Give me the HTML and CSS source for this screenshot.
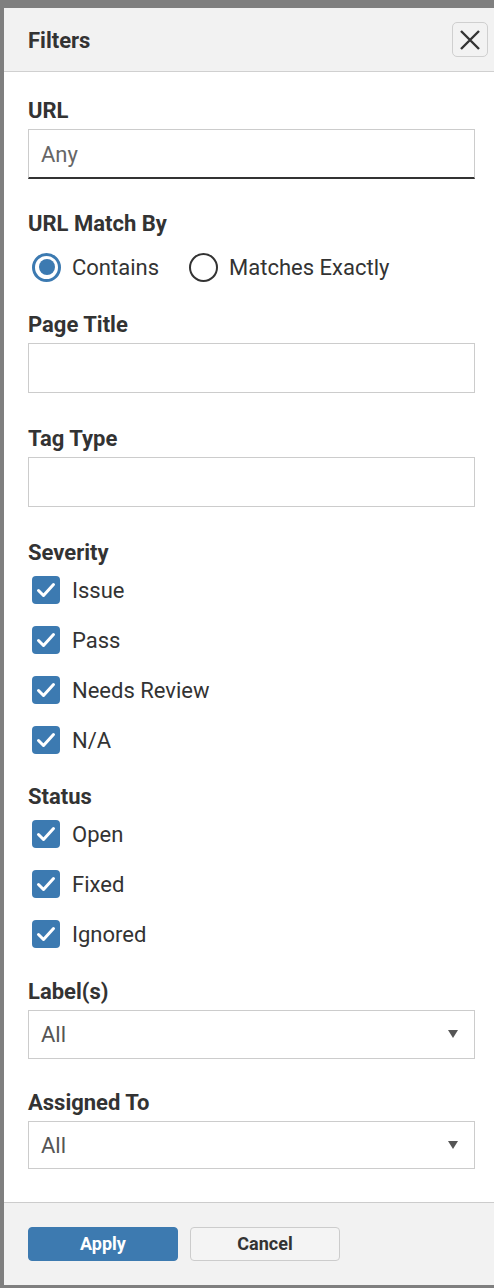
FILE: index.html
```html
<!DOCTYPE html>
<html lang="en">
<head>
<meta charset="utf-8">
<title>Filters</title>
<link rel="stylesheet" href="styles.css">
</head>
<body>
<div class="modal">
  <div class="modal-header">
    <h2 class="modal-title">Filters</h2>
    <button class="close-btn" aria-label="Close">
      <svg width="22" height="22" viewBox="0 0 22 22"><path d="M2 2 L20 20 M20 2 L2 20" stroke="#333" stroke-width="2.4" fill="none"/></svg>
    </button>
  </div>
  <div class="modal-body">
    <div class="field f-url">
      <div class="label">URL</div>
      <div class="input input-active"><span class="placeholder">Any</span></div>
    </div>
    <div class="field f-match">
      <div class="label">URL Match By</div>
      <div class="radio-row">
        <div class="radio-item"><span class="radio checked"></span><span class="opt">Contains</span></div>
        <div class="radio-item"><span class="radio"></span><span class="opt">Matches Exactly</span></div>
      </div>
    </div>
    <div class="field f-title">
      <div class="label">Page Title</div>
      <div class="input"></div>
    </div>
    <div class="field f-tag">
      <div class="label">Tag Type</div>
      <div class="input"></div>
    </div>
    <div class="field f-sev">
      <div class="label">Severity</div>
      <div class="checks">
        <div class="check-item"><span class="cb"><svg width="28" height="28" viewBox="0 0 28 28"><path d="M6.5 14.5 L11.5 19.5 L21.5 8.5" stroke="#fff" stroke-width="3" fill="none" stroke-linecap="round" stroke-linejoin="round"/></svg></span><span class="opt">Issue</span></div>
        <div class="check-item"><span class="cb"><svg width="28" height="28" viewBox="0 0 28 28"><path d="M6.5 14.5 L11.5 19.5 L21.5 8.5" stroke="#fff" stroke-width="3" fill="none" stroke-linecap="round" stroke-linejoin="round"/></svg></span><span class="opt">Pass</span></div>
        <div class="check-item"><span class="cb"><svg width="28" height="28" viewBox="0 0 28 28"><path d="M6.5 14.5 L11.5 19.5 L21.5 8.5" stroke="#fff" stroke-width="3" fill="none" stroke-linecap="round" stroke-linejoin="round"/></svg></span><span class="opt">Needs Review</span></div>
        <div class="check-item"><span class="cb"><svg width="28" height="28" viewBox="0 0 28 28"><path d="M6.5 14.5 L11.5 19.5 L21.5 8.5" stroke="#fff" stroke-width="3" fill="none" stroke-linecap="round" stroke-linejoin="round"/></svg></span><span class="opt">N/A</span></div>
      </div>
    </div>
    <div class="field f-status">
      <div class="label">Status</div>
      <div class="checks">
        <div class="check-item"><span class="cb"><svg width="28" height="28" viewBox="0 0 28 28"><path d="M6.5 14.5 L11.5 19.5 L21.5 8.5" stroke="#fff" stroke-width="3" fill="none" stroke-linecap="round" stroke-linejoin="round"/></svg></span><span class="opt">Open</span></div>
        <div class="check-item"><span class="cb"><svg width="28" height="28" viewBox="0 0 28 28"><path d="M6.5 14.5 L11.5 19.5 L21.5 8.5" stroke="#fff" stroke-width="3" fill="none" stroke-linecap="round" stroke-linejoin="round"/></svg></span><span class="opt">Fixed</span></div>
        <div class="check-item"><span class="cb"><svg width="28" height="28" viewBox="0 0 28 28"><path d="M6.5 14.5 L11.5 19.5 L21.5 8.5" stroke="#fff" stroke-width="3" fill="none" stroke-linecap="round" stroke-linejoin="round"/></svg></span><span class="opt">Ignored</span></div>
      </div>
    </div>
    <div class="field f-labels">
      <div class="label">Label(s)</div>
      <div class="select"><span class="sel-val">All</span><span class="arrow"></span></div>
    </div>
    <div class="field f-assign">
      <div class="label">Assigned To</div>
      <div class="select select-b"><span class="sel-val">All</span><span class="arrow"></span></div>
    </div>
  </div>
  <div class="modal-footer">
    <button class="btn btn-primary">Apply</button>
    <button class="btn btn-default">Cancel</button>
  </div>
</div>
</body>
</html>
```

FILE: styles.css
```css
* { box-sizing: border-box; }
html, body { margin: 0; padding: 0; }
body {
  background: #7f7f7f;
  width: 494px;
  height: 1288px;
  overflow: hidden;
  font-family: Roboto, "Liberation Sans", Arial, sans-serif;
  color: #333;
}
.modal {
  margin: 8px 0 0 4px;
  width: 490px;
  height: 1277px;
  background: #fff;
  display: flex;
  flex-direction: column;
}
.modal-header {
  height: 65px;
  background: #f2f2f2;
  border-bottom: 1px solid #d0d0d0;
  display: flex;
  align-items: center;
  justify-content: space-between;
  padding: 0 6px 0 24px;
}
.modal-title {
  margin: 0;
  font-size: 22px;
  font-weight: 700;
  line-height: 24px;
  color: #333;
  padding-top: 3px;
}
.close-btn {
  width: 36px;
  height: 35px;
  border: 1px solid #cfcfcf;
  border-radius: 5px;
  background: #f2f2f2;
  padding: 0;
  display: flex;
  align-items: center;
  justify-content: center;
  margin-top: 1px;
}
.modal-body {
  flex: 1;
  padding: 26px 19px 0 24px;
}
.label {
  font-size: 22px;
  font-weight: 700;
  line-height: 24px;
  height: 24px;
  padding-top: 1px;
  color: #333;
  margin-bottom: 7px;
}
.field { margin-bottom: 33px; }
.f-url { margin-bottom: 32px; }
.f-match { margin-bottom: 30px; }
.f-sev { margin-bottom: 30px; }
.f-status { margin-bottom: 31px; }
.f-labels { margin-bottom: 31px; }
.input {
  height: 50px;
  border: 1px solid #cccccc;
  background: #fff;
  display: flex;
  align-items: center;
  padding: 0 12px;
}
.input-active { border-bottom: 2px solid #333; }
.placeholder {
  font-size: 22px;
  color: #666;
  padding-top: 2px;
}
.radio-row {
  display: flex;
  align-items: center;
  gap: 30px;
  margin-top: 18px;
  padding-left: 4px;
}
.f-match .label { margin-bottom: 0; }
.radio-item {
  display: flex;
  align-items: center;
  gap: 11px;
}
.radio {
  width: 29px;
  height: 29px;
  border-radius: 50%;
  border: 2.5px solid #333;
  display: flex;
  align-items: center;
  justify-content: center;
  background: #fff;
}
.radio.checked { border: 3px solid #3c7ab1; }
.radio.checked::after {
  content: "";
  width: 16px;
  height: 16px;
  border-radius: 50%;
  background: #3c7ab1;
}
.opt {
  font-size: 22px;
  color: #333;
  line-height: 24px;
  padding-top: 2px;
}
.checks {
  display: flex;
  flex-direction: column;
  gap: 22px;
  margin-top: 12px;
  padding-left: 4px;
}
.f-sev .label, .f-status .label { margin-bottom: 0; }
.check-item {
  display: flex;
  align-items: center;
  gap: 12px;
  height: 28px;
}
.cb {
  width: 28px;
  height: 28px;
  border-radius: 4px;
  background: #3c7ab1;
  display: flex;
}
.select {
  height: 49px;
  border: 1px solid #cccccc;
  display: flex;
  align-items: center;
  justify-content: space-between;
  padding: 0 16px 0 12px;
}
.select-b { height: 48px; }
.sel-val { font-size: 22px; color: #555; padding-top: 1px; }
.arrow {
  width: 0;
  height: 0;
  border-left: 5.5px solid transparent;
  border-right: 5.5px solid transparent;
  border-top: 8px solid #555;
}
.modal-footer {
  height: 84px;
  background: #f2f2f2;
  border-top: 1px solid #cccccc;
  padding: 24px 0 0 24px;
  display: flex;
  gap: 12px;
  align-items: flex-start;
}
.btn {
  width: 150px;
  height: 34px;
  border-radius: 4px;
  font-family: Roboto, "Liberation Sans", Arial, sans-serif;
  font-size: 18px;
  font-weight: 700;
  padding: 0;
}
.btn-primary {
  background: #3d7ab0;
  border: 1px solid #3d7ab0;
  color: #fff;
}
.btn-default {
  background: #f4f4f4;
  border: 1px solid #cccccc;
  color: #333;
}
```
